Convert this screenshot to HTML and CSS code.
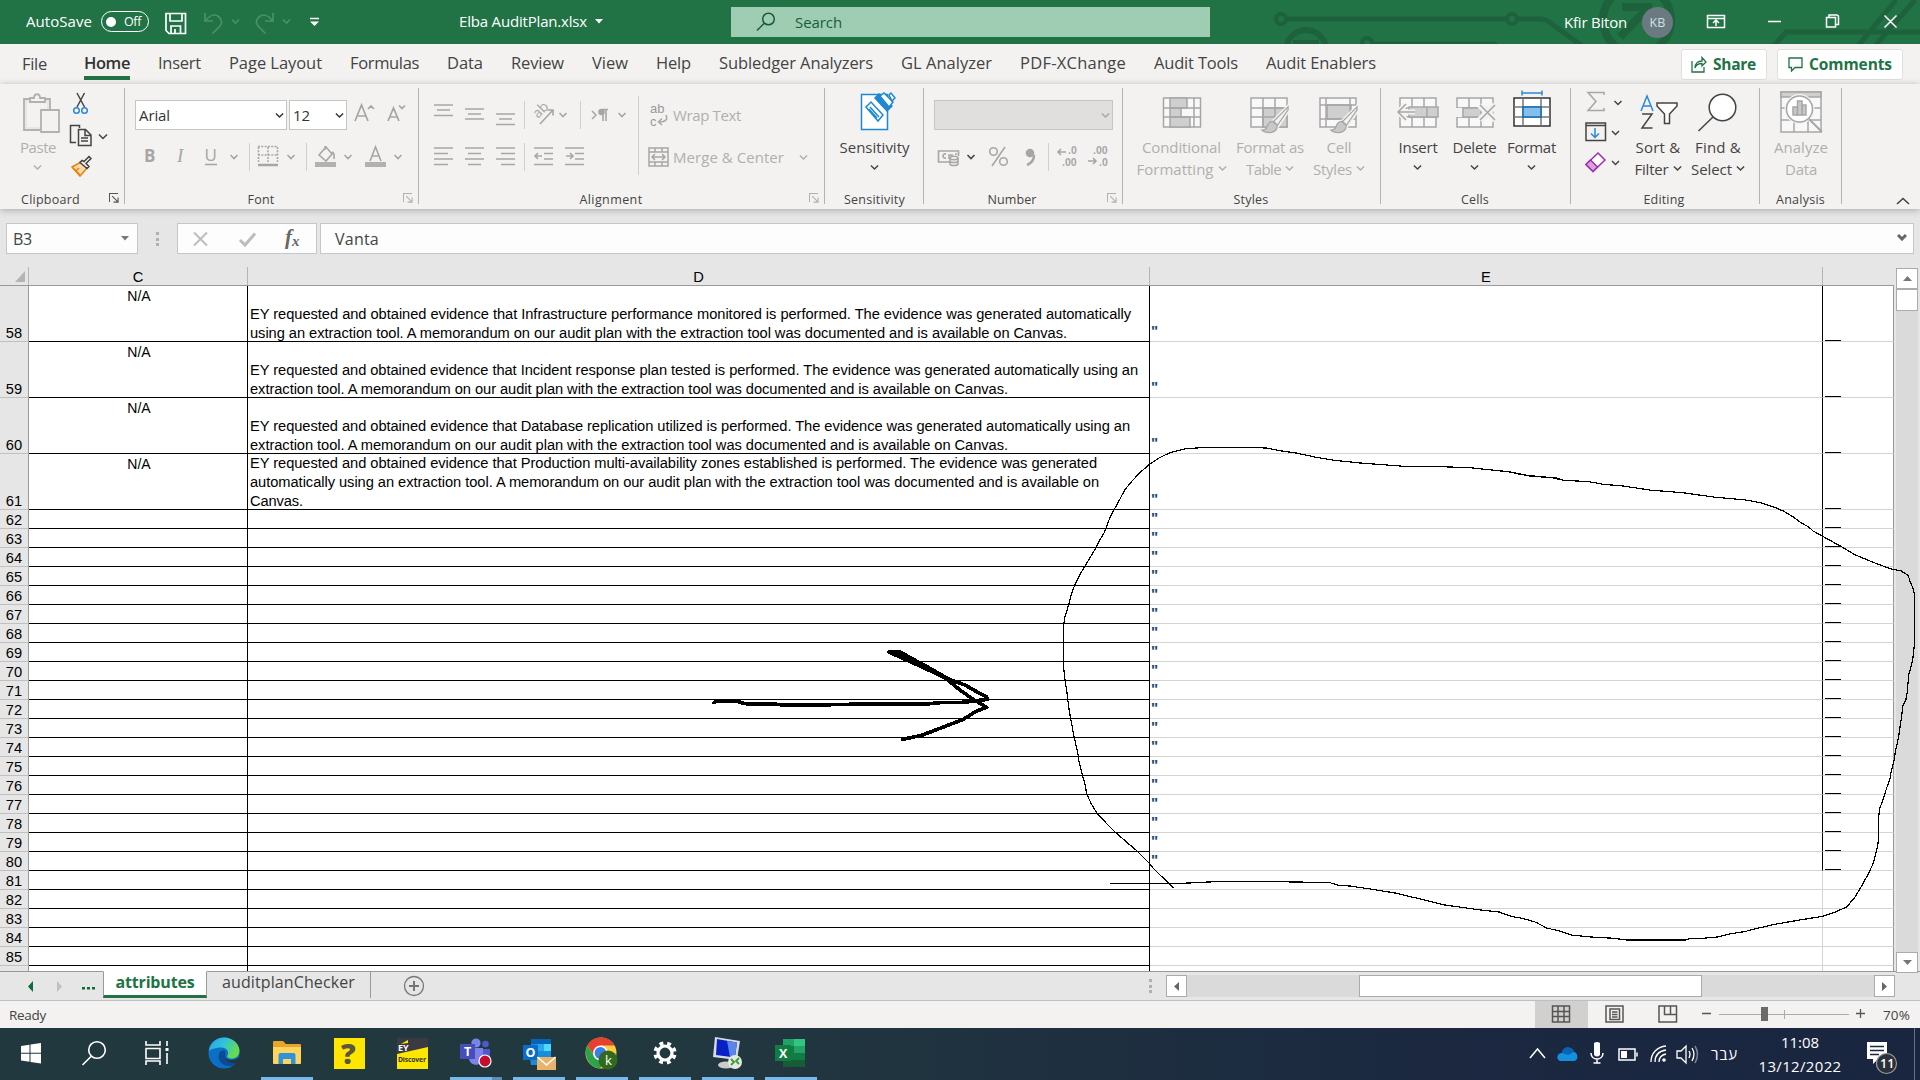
FILE: index.html
```html
<!DOCTYPE html>
<html lang="en">
<head>
<meta charset="utf-8">
<title>Elba AuditPlan.xlsx - Excel</title>
<link rel="stylesheet" href="styles.css">
</head>
<body>
<svg class="defs" width="0" height="0">
  <symbol id="chev" viewBox="0 0 10 7"><path d="M1 1.2l4 4 4-4" fill="none" stroke="currentColor" stroke-width="1.6"/></symbol>
  <symbol id="launch" viewBox="0 0 11 11"><path d="M.5 10V.5H10M3.5 3.5l6 6M10 5v5H5" fill="none" stroke="currentColor" stroke-width="1.2"/></symbol>
  <symbol id="brush" viewBox="0 0 32 32"><path d="M31 2L15 18l4 5L31 5z" fill="#f3f2f1" stroke="#f3f2f1" stroke-width="4"/><path d="M30 3L15 18l4 4L30 6z" fill="#f3f2f1" stroke="#a6a6a6" stroke-width="1.3"/><path d="M14 18c-4 0-5 3-6 6-1 2-3 3-5 3 3 3 12 4 15-1l1-4z" fill="#c8c8c8" stroke="#a6a6a6" stroke-width="1.3"/></symbol>
</svg>

<header class="titlebar">
  <svg class="art" width="660" height="44" viewBox="1260 0 660 44" fill="none" stroke="#1e623d" stroke-width="5">
    <circle cx="1281" cy="19" r="5" stroke-width="4"/><path d="M1287 19H1506M1518 19h22q6 0 12 5l30 22"/><circle cx="1512" cy="19" r="5" stroke-width="4"/>
    <circle cx="1306" cy="50" r="20" stroke-width="6"/><path d="M1293 43h26" stroke-width="6"/>
    <circle cx="1367" cy="43" r="5" stroke-width="4"/><path d="M1372 44h122l10 6"/>
    <circle cx="1637" cy="20" r="34" stroke-width="8"/><path d="M1622 7h26v26M1646 10l-26 27" stroke-width="8"/>
    <path d="M1774 46l12-14h134M1858 46l38-46M1875 46l40-46"/>
  </svg>
  <span class="autosave" data-w="66">AutoSave</span>
  <span class="toggle"><i></i><span data-w="17">Off</span></span>
  <svg class="qat" width="170" height="44" viewBox="155 0 170 44" fill="none" stroke="#fff" stroke-width="1.7">
    <path d="M166 13.500h19.500v20H169l-3-3zM170 14v7h12v-7M171 33v-7h9.500v7M175 33v-4"/>
    <g stroke="#4c9068"><path d="M205 13v8h8M205.500 20.500c4-5 9-7 13-4s4 7 1 10l-7 7"/><path d="M273 13v8h-8M272.500 20.500c-4-5-9-7-13-4s-4 7-1 10l7 7"/><path d="M232 19.500l3.500 3.500 3.500-3.500M283 19.500l3.500 3.500 3.500-3.500"/></g>
    <path d="M310 18.500h9" stroke-width="1.500"/><path d="M310 21.500h9l-4.500 4.500z" fill="#fff" stroke="none"/>
  </svg>
  <span class="docname" data-w="128">Elba AuditPlan.xlsx</span>
  <svg class="tri" width="8" height="5"><path d="M0 0h8L4 4.500z" fill="#fff"/></svg>
  <div class="search">
    <svg width="20" height="20" viewBox="0 0 20 20" fill="none" stroke="#185c37" stroke-width="1.500"><circle cx="12.500" cy="7" r="5.800"/><path d="M8.300 11.200L1 18.500"/></svg>
    <span data-w="47">Search</span>
  </div>
  <span class="user" data-w="63">Kfir Biton</span>
  <span class="avatar"><span data-w="16">KB</span></span>
  <svg class="winctl" width="220" height="44" viewBox="1700 0 220 44" fill="none" stroke="#fff" stroke-width="1.500">
    <path d="M1707.500 15.500h17v12h-17zM1707 18.500h18M1716 26v-5.500M1713 23l3-3 3 3M1768 21.500h13M1826.500 17.500h9v9.500h-9zM1829 17v-2h7.500q2 0 2 2v7.500h-2.500M1884.500 15.500l12 12M1896.500 15.500l-12 12"/>
  </svg>
</header>

<nav class="tabs">
  <span class="t-file" data-w="25">File</span><span class="active" data-w="46">Home</span><span data-w="43">Insert</span><span data-w="93">Page Layout</span><span data-w="69">Formulas</span><span data-w="36">Data</span><span data-w="53">Review</span><span data-w="36">View</span><span data-w="35">Help</span><span data-w="154">Subledger Analyzers</span><span data-w="91">GL Analyzer</span><span data-w="106">PDF-XChange</span><span data-w="84">Audit Tools</span><span data-w="110">Audit Enablers</span>
  <button class="share"><svg width="16" height="17" viewBox="0 0 16 17" fill="none" stroke="#217346" stroke-width="1.300"><path d="M1 5v11h12v-5M4 12c0-5 3-7 7-7V1.500L15 6l-4 4V7.500c-4 0-6 1-7 4.500z"/></svg><b data-w="43">Share</b></button>
  <button class="comments"><svg width="15" height="15" viewBox="0 0 15 15" fill="none" stroke="#217346" stroke-width="1.300"><path d="M1 1h13v9.500H7L3.500 14v-3.500H1z"/></svg><b data-w="83">Comments</b></button>
</nav>

<section class="ribbon">
  <div class="group g-clip">
    <div class="body">
      <div class="big off w65">
        <svg width="65" height="53" viewBox="0 84 65 53" fill="#e6e6e6" stroke="#b1b1b1" stroke-width="1.800"><path d="M24 99h26v31H24z"/><path d="M27 102h20v25H27z" fill="#f3f2f1" stroke="none"/><path d="M30 102v-4h4c0-5 6-5 6 0h5v4z" fill="#f3f2f1"/><path d="M41 110h18v22H41z" fill="#f3f2f1"/></svg>
        <span data-w="36">Paste</span><svg class="dd" width="9" height="7"><use href="#chev"/></svg>
      </div>
      <svg width="58" height="105" viewBox="65 84 58 105" fill="none" stroke="#444" stroke-width="1.500">
        <path d="M77 93l7.500 14M84.500 93L77 107"/><circle cx="76.500" cy="110.500" r="2.800" stroke="#2b88d8"/><circle cx="84.500" cy="110.500" r="2.800" stroke="#2b88d8"/>
        <path d="M76 142.500h-5.500v-17h9V128M78.500 129.500h7l5.500 5.500v10.500H78.500zM85 130v5.500h6M81 138h7M81 141h7"/>
        <path d="M99 134.500l4 4 4-4" />
        <path d="M72 167l9-5 6 6-7 8z" fill="#fbd9a8" stroke="#e8830c"/><path d="M76 171l3-3M73 168l7 7" stroke="#e8830c"/><path d="M80 162.500l7 6 2-2-3-3 5-5-2-2-5 5-2-1z" fill="#f3f2f1"/>
      </svg>
    </div>
    <div class="cap"><span data-w="59">Clipboard</span><svg class="launch dark" width="10" height="10"><use href="#launch"/></svg></div>
  </div>

  <div class="group g-font">
    <div class="body col">
      <div class="row1"><div class="combo c1"><span data-w="31">Arial</span><svg width="9" height="7"><use href="#chev"/></svg></div><div class="combo c2"><span data-w="17">12</span><svg width="9" height="7"><use href="#chev"/></svg></div>
        <svg width="68" height="30" viewBox="347 100 68 30" fill="none" stroke="#a6a6a6" stroke-width="1.700"><path d="M355 121l6.500-16 6.500 16M357.500 116h8M388 121l5.500-13 5.500 13M390 117h7M368 109l3-3 3 3M399 105.500l3 3 3-3"/></svg></div>
      <svg width="293" height="38" viewBox="125 138 293 38" fill="none" stroke="#a6a6a6" stroke-width="1.600">
        <text class="glyph b" x="144" y="162">B</text><text class="glyph i" x="177" y="162">I</text><text class="glyph" x="204.500" y="161">U</text><path d="M205 164.500h12"/>
        <path d="M230.500 155l3.500 3.500 3.500-3.500M287.500 155l3.500 3.500 3.500-3.500M344.500 155l3.500 3.500 3.500-3.500M394.500 155l3.500 3.500 3.500-3.500"/>
        <path d="M249.500 143v28M306.500 143v28" stroke="#d0cfce" stroke-width="1"/>
        <path d="M258.500 147v15M268 147v15M277.500 147v15M258 146.500h20M258 155h20" stroke-dasharray="2 1.300"/><path d="M258 165h20" stroke-width="2.500"/>
        <path d="M319 155l7-8 6 7-6 7zM325 150v-4M332 152c3 1 2 4 2 7" /><path d="M315 164.500h21M365 164.500h21" stroke-width="5" stroke="#b1b1b1"/><path d="M370 161l5.500-14 5.500 14M372 156h7"/>
      </svg>
    </div>
    <div class="cap"><span data-w="27">Font</span><svg class="launch" width="10" height="10"><use href="#launch"/></svg></div>
  </div>

  <div class="group g-align">
    <div class="body">
      <svg width="228" height="105" viewBox="419 84 228 105" fill="none" stroke="#a6a6a6" stroke-width="1.600">
        <path d="M434 105h19M437 110h13M434 115.500h19M465 109h19M468 114h13M465 119h19M496 114h19M499 119h13M496 124.500h19"/>
        <path d="M434 148h19M434 153.500h14M434 159h19M434 164.500h14M465 148h19M468 153.500h13M465 159h19M468 164.500h13M496 148h19M501 153.500h14M496 159h19M501 164.500h14"/>
        <path d="M534 148h19M544 153.500h9M544 159h9M534 164.500h19M535 156h7M538 153l-3 3 3 3M565 148h19M575 153.500h9M575 159h9M565 164.500h19M566 156h7M570 153l3 3-3 3"/>
        <path d="M524.500 101v28M580.500 101v28M524.500 143v28M638.500 96v79" stroke="#d0cfce" stroke-width="1"/>
        <text class="ab" transform="translate(538 119) rotate(-45)">ab</text><path d="M540 124l13-14M547.500 110h5.500v5.500"/>
        <path d="M559.500 113l3.500 3.500 3.500-3.500M618.500 113l3.500 3.500 3.500-3.500M592 111l4 4-4 4M603 121v-11M606 121v-11M608 109.500h-6"/><circle cx="601.500" cy="112" r="2.500" fill="#a6a6a6"/>
      </svg>
      <div class="col wrapcol">
        <div class="wrapbtn"><svg width="22" height="28" viewBox="0 -2 22 28" fill="none" stroke="#a6a6a6" stroke-width="1.500"><text class="ab2" x="3" y="10">ab</text><text class="ab2" x="3" y="22.500">c</text><path d="M19 12c2 4 0 7-7 7M15 15.500L11.500 19l3.500 3"/></svg><span data-w="68">Wrap Text</span></div>
        <div class="wrapbtn"><svg width="22" height="24" viewBox="0 0 22 24" fill="none" stroke="#a6a6a6" stroke-width="1.500"><path d="M2 3h19v18H2zM2 7h19M2 17h19M8 3v4M15 3v4M8 17v4M15 17v4M5 12h13M8 9l-3 3 3 3M15 9l3 3-3 3"/></svg><span data-w="111">Merge &amp; Center</span><svg class="mc" width="9" height="7"><use href="#chev"/></svg></div>
      </div>
    </div>
    <div class="cap"><span data-w="63">Alignment</span><svg class="launch" width="10" height="10"><use href="#launch"/></svg></div>
  </div>

  <div class="group g-sens">
    <div class="body center"><div class="big">
      <svg width="60" height="53" viewBox="844 84 60 53" fill="#fff" stroke="#1e88d2" stroke-width="1.500"><path d="M860.500 94.500h26v35h-26z"/><path d="M865 107l5-5 12 13-5 6z"/><path d="M869 107l9 10M868 109l8 9" /><path d="M874 98l4-4 13 12-5 5z" fill="#1e88d2"/><path d="M879 96l4-3 9 9-4 5z"/><path d="M888 95l2-2 4 5-3 3z"/></svg>
      <span data-w="70">Sensitivity</span><svg class="dd" width="9" height="7"><use href="#chev"/></svg></div></div>
    <div class="cap"><span data-w="61">Sensitivity</span></div>
  </div>

  <div class="group g-num">
    <div class="body col">
      <div class="row1"><div class="combo c3"><svg width="9" height="7"><use href="#chev"/></svg></div></div>
      <svg width="198" height="38" viewBox="924 138 198 38" fill="none" stroke="#a6a6a6" stroke-width="1.600">
        <path d="M951 162h-12.500v-11h20v5M946 154c-4-1-4 5 0 4M949 159v-4h3v2M955 154h2"/><path d="M950 158v6c0 2 8 2 8 0v-6M950 161c0 2 8 2 8 0" fill="#f3f2f1"/><ellipse cx="954" cy="158" rx="4" ry="1.700" fill="#f3f2f1"/>
        <path d="M967.500 155l3.500 3.500 3.500-3.500" stroke="#444"/>
        <circle cx="993.500" cy="151.500" r="3.800"/><circle cx="1003.500" cy="161.500" r="3.800"/><path d="M1005 147l-13 19"/>
        <path d="M1027 165c5-2 7-6 7-10" stroke-width="2.500"/><circle cx="1030" cy="153" r="4.300" fill="#a6a6a6" stroke="none"/>
        <path d="M1048.500 143v28" stroke="#d0cfce" stroke-width="1"/>
        <path d="M1058 152h8M1061 149l-3 3 3 3M1088 161h8M1093 158l3 3-3 3"/>
        <text class="dec" x="1068" y="154">.0</text><text class="dec" x="1062" y="166">.00</text><text class="dec" x="1093" y="154">.00</text><text class="dec" x="1099" y="166">.0</text>
      </svg>
    </div>
    <div class="cap"><span data-w="49">Number</span><svg class="launch" width="10" height="10"><use href="#launch"/></svg></div>
  </div>

  <div class="group g-styles">
    <div class="body">
      <div class="big off w100"><svg width="40" height="53" viewBox="1162 84 40 53" fill="none" stroke="#a6a6a6" stroke-width="1.500"><path d="M1163.500 98h37v29h-37z" fill="#f8f8f8"/><path d="M1170 98h17v10h-17zM1170 108h11v9h-11zM1170 117h20v10h-20z" fill="#cfcfcf"/><path d="M1163 108h38M1163 117h38M1194 98v29"/></svg><span data-w="79">Conditional</span><div class="l2"><span data-w="77">Formatting</span><svg width="9" height="7"><use href="#chev"/></svg></div></div>
      <div class="big off w76"><svg width="44" height="53" viewBox="1249 84 44 53" fill="none" stroke="#a6a6a6" stroke-width="1.500"><path d="M1252 98h36v29h-36z" fill="#f8f8f8"/><path d="M1264 108h24v19h-24z" fill="#cfcfcf"/><path d="M1252 108h36M1252 117h36M1264 98v29M1276 98v29"/><use href="#brush" x="1260" y="104" width="31" height="31"/></svg><span data-w="68">Format as</span><div class="l2"><span data-w="35">Table</span><svg width="9" height="7"><use href="#chev"/></svg></div></div>
      <div class="big off w62"><svg width="44" height="53" viewBox="1319 84 44 53" fill="none" stroke="#a6a6a6" stroke-width="1.500"><path d="M1322 98h36v29h-36z" fill="#f8f8f8"/><path d="M1329 105h24v14h-24z" fill="#cfcfcf"/><path d="M1322 105h36M1322 119h36M1328 98v29M1352 98v21"/><use href="#brush" x="1330" y="104" width="31" height="31"/></svg><span data-w="25">Cell</span><div class="l2"><span data-w="39">Styles</span><svg width="9" height="7"><use href="#chev"/></svg></div></div>
    </div>
    <div class="cap"><span data-w="35">Styles</span></div>
  </div>

  <div class="group g-cells">
    <div class="body">
      <div class="big w56"><svg width="46" height="53" viewBox="1396 84 46 53" fill="none" stroke="#a6a6a6" stroke-width="1.500"><path d="M1401 98h36v29h-36z" fill="#f8f8f8"/><path d="M1413 98v29M1425 98v29M1401 108h36M1401 117h36"/><path d="M1410 107h29v10h-29z" fill="#cfcfcf"/><path d="M1428 107v10"/><path d="M1416 112h-17M1407 104l-8 8 8 8" stroke="#f3f2f1" stroke-width="5"/><path d="M1416 112h-17M1407 104l-8 8 8 8"/></svg><span data-w="39">Insert</span><svg class="dd" width="9" height="7"><use href="#chev"/></svg></div>
      <div class="big w57"><svg width="46" height="53" viewBox="1452 84 46 53" fill="none" stroke="#a6a6a6" stroke-width="1.500"><path d="M1457 98h36v29h-36z" fill="#f8f8f8"/><path d="M1469 98v29M1481 98v29M1457 108h36M1457 117h36"/><path d="M1455 108h8v9h-8z" fill="#f3f2f1" stroke="none"/><path d="M1463 108h18v9h-18z" fill="#cfcfcf"/><path d="M1480 105l15 15M1495 105l-15 15" stroke="#f3f2f1" stroke-width="7"/><path d="M1480 105l15 15M1495 105l-15 15"/></svg><span data-w="44">Delete</span><svg class="dd" width="9" height="7"><use href="#chev"/></svg></div>
      <div class="big w57"><svg width="46" height="53" viewBox="1509 84 46 53" fill="none" stroke="#777" stroke-width="1.500"><path d="M1514 98h36v28h-36z" fill="#fff" stroke="#333"/><path d="M1523 98v28M1541 98v28M1514 107h36M1514 117h36"/><path d="M1523 107h18v10h-18z" fill="#83beec" stroke="#0f6cbd"/><path d="M1522 93h20M1522 90.500v5M1542 90.500v5" stroke="#2b88d8"/></svg><span data-w="49">Format</span><svg class="dd" width="9" height="7"><use href="#chev"/></svg></div>
    </div>
    <div class="cap"><span data-w="28">Cells</span></div>
  </div>

  <div class="group g-edit">
    <div class="body">
      <svg width="58" height="105" viewBox="1571 84 58 105" fill="none" stroke="#444" stroke-width="1.500">
        <path d="M1604 95v-2.500h-16l8 9-8 9h16V108" stroke="#a6a6a6"/><path d="M1614.500 101l3.500 3.500 3.500-3.500M1612 131l3.500 3.500 3.500-3.500M1612 161l3.500 3.500 3.500-3.500"/>
        <path d="M1586 123h19.500v17.500H1586zM1586 125.500h19"/><path d="M1595 128v9M1591 133.500l4 4 4-4" stroke="#2b88d8"/>
        <path d="M1598 153l7 7-12 11.500-7-7z" fill="#fff" stroke="#9b2fae"/><path d="M1590.500 160l7 7-4.500 4.500-7-7z" fill="#dba0dc" stroke="#9b2fae"/>
      </svg>
      <div class="big w58"><svg width="46" height="53" viewBox="1634 84 46 53" fill="none" stroke="#444" stroke-width="1.500"><path d="M1640 111l6-15 6 15M1642 106h8" stroke="#2b88d8"/><path d="M1641 114h10l-10 14h10.500"/><path d="M1656 103h20v3l-7.500 8v9.500h-5V114l-7.500-8z" fill="#fff"/></svg><span data-w="45">Sort &amp;</span><div class="l2"><span data-w="34">Filter</span><svg width="9" height="7"><use href="#chev"/></svg></div></div>
      <div class="big w62"><svg width="46" height="53" viewBox="1695 84 46 53" fill="none" stroke="#444" stroke-width="1.500"><circle cx="1722.500" cy="107.500" r="13.300" fill="#fff"/><path d="M1713 117l-14.500 14"/></svg><span data-w="46">Find &amp;</span><div class="l2"><span data-w="41">Select</span><svg width="9" height="7"><use href="#chev"/></svg></div></div>
    </div>
    <div class="cap"><span data-w="41">Editing</span></div>
  </div>

  <div class="group g-ana">
    <div class="body center"><div class="big off"><svg width="46" height="53" viewBox="1778 84 46 53" fill="none" stroke="#a6a6a6" stroke-width="1.500"><path d="M1781 92h40v40h-40z" fill="#f8f8f8"/><path d="M1781 92h40v5h-40z" fill="#cfcfcf"/><path d="M1781 108h40M1781 120h40M1794 120v12M1808 120v12"/><circle cx="1799.500" cy="109" r="15" fill="#f3f2f1" stroke="none"/><circle cx="1799.500" cy="109" r="13" fill="#fff"/><path d="M1793 107h4.500v8h-4.500zM1802 105h4v10h-4z" fill="#c8c8c8"/><path d="M1797.500 101h4.500v14h-4.500z" fill="#c8c8c8"/><path d="M1809 119l13 13" stroke-width="2"/></svg><span data-w="54">Analyze</span><span data-w="32">Data</span></div></div>
    <div class="cap"><span data-w="49">Analysis</span></div>
  </div>
  <svg class="collapse" width="14" height="8" fill="none" stroke="#444" stroke-width="1.600"><path d="M1 7l6-5.500L13 7"/></svg>
</section>

<section class="formula">
  <div class="namebox"><span data-w="19">B3</span><svg width="8" height="5"><path d="M0 0h8L4 4.500z" fill="#777"/></svg></div>
  <div class="dots"></div>
  <div class="fxbox"><svg width="138" height="29" viewBox="178 224 138 29" fill="none" stroke="#bdbdbd" stroke-width="2"><path d="M194 232.500l13 13M207 232.500l-13 13"/><path d="M240 240l5 5 10-11.500" stroke-width="3"/><text class="fx" x="285" y="244">f</text><text class="fx s" x="292" y="246">x</text></svg></div>
  <div class="fbar"><span data-w="44">Vanta</span><svg width="10" height="7" fill="none" stroke="#666" stroke-width="3"><path d="M1 1l4 4 4-4"/></svg></div>
</section>

<main class="sheet">
  <div class="cells">
    <div class="colheads"><div class="corner"><svg width="10" height="11"><path d="M10 0v11H0z" fill="#b4b4b4"/></svg></div><div class="h-c">C</div><div class="h-d">D</div><div class="h-e">E</div><div class="h-f"></div></div>
    <div class="rows" id="rows"></div>
  </div>
  <div class="vscroll">
    <div class="sbtn"><svg width="9" height="5"><path d="M0 5h9L4.500 0z" fill="#777"/></svg></div>
    <div class="vthumb"></div>
    <div class="sbtn low"><svg width="9" height="5"><path d="M0 0h9L4.500 5z" fill="#777"/></svg></div>
  </div>
</main>

<footer class="sheettabs">
  <svg width="103" height="29" viewBox="0 971 103 29"><path d="M33 980v11l-5-5.500z" fill="#0e6b3a"/><path d="M57 980v11l5-5.500z" fill="#c0c0c0"/><path d="M82 986h3v2.500h-3zM87 986h3v2.500h-3zM92 986h3v2.500h-3z" fill="#0e6b3a"/></svg>
  <div class="stab on"><b data-w="79">attributes</b></div>
  <div class="stab"><span data-w="133">auditplanChecker</span></div>
  <svg class="plus" width="22" height="22" fill="none" stroke="#777" stroke-width="1.300"><circle cx="11" cy="11" r="9.500"/><path d="M11 6v10M6 11h10" stroke-width="2"/></svg>
  <div class="dots small"></div>
  <div class="hscroll"><div class="hbtn"><svg width="5" height="9"><path d="M5 0v9L0 4.500z" fill="#666"/></svg></div><div class="hthumb"></div><div class="hbtn r"><svg width="5" height="9"><path d="M0 0v9l5-4.500z" fill="#666"/></svg></div></div>
</footer>

<div class="status">
  <span class="ready" data-w="37">Ready</span>
  <svg width="345" height="27" viewBox="1535 1001 345 27" fill="none" stroke="#555" stroke-width="1.500">
    <path d="M1535 1001h53v27h-53z" fill="#d2d0ce" stroke="none"/>
    <path d="M1552.500 1006h17v16h-17zM1558 1006v16M1564 1006v16M1552 1011.500h18M1552 1016.500h18"/>
    <path d="M1606 1006h17v16h-17zM1610 1009h9.500v10.500H1610zM1612 1012h5.500M1612 1014.500h5.500M1612 1017h5.500"/>
    <path d="M1659 1006h17.500v16H1659zM1664.500 1006v8.500h6v-8.500M1670.500 1014.500h6"/>
    <path d="M1702 1013.500h9M1856 1013.500h9M1860.500 1009v9" stroke-width="1.300"/>
    <path d="M1719 1014.500h130M1784.500 1010v9" stroke="#ababab" stroke-width="1"/><path d="M1761 1007h7v14h-7z" fill="#6a6a6a" stroke="none"/>
  </svg>
  <span data-w="27">70%</span>
</div>

<div class="taskbar">
  <div class="task first"><svg width="22" height="22" viewBox="0 0 22 22" fill="#fff"><path d="M1 4l8.500-1.300v8H1zM10.500 2.500L21 1v9.700H10.500zM1 11.700h8.500v8L1 18.500zM10.500 11.700H21v9.800L10.500 20z"/></svg></div>
  <div class="task"><svg width="26" height="26" viewBox="0 0 26 26" fill="none" stroke="#fff" stroke-width="1.600"><circle cx="16" cy="10" r="8.300"/><path d="M10 16.500L1.500 25"/></svg></div>
  <div class="task"><svg width="26" height="26" viewBox="0 0 26 26" fill="none" stroke="#fff" stroke-width="1.600"><path d="M2 1v4h14V1M2 8.500h14v10H2zM2 25v-4h14v4M23 1v5M23 13v11"/><path d="M21.500 8h3v3h-3z" fill="#fff" stroke="none"/></svg></div>
  <div class="task edge"><svg width="32" height="32" viewBox="0 0 32 32"><defs><linearGradient id="e1" x1="0" y1="0" x2="1" y2=".4"><stop offset="0" stop-color="#2a9fe6"/><stop offset=".5" stop-color="#2fc2df"/><stop offset="1" stop-color="#66dc4c"/></linearGradient></defs><circle cx="16" cy="16" r="15.500" fill="#0b6fc8"/><path d="M.8 14C2 5 9 .5 16 .5 25 .500 31.500 7 31.500 14c0 5-4 7.500-8 7.500-3 0-5-1-4-3 2-4-1-8-6-8-6 0-11 2-12.700 3.500z" fill="url(#e1)"/><path d="M12 15c-4 6 1 14 9 14 4 0 7-2 8-3.500-5 1.500-12-1-12-7 0-3 1-5-1-5-2 0-3 0-4 1.500z" fill="#0d4a94"/><path d="M17.500 15c-3 3 0 8 6 8 3 0 5-1 6.500-2.500l2.500 2-1 3c-6 2-13 0-14.500-5-.5-2 0-4 .5-5.500z" fill="#22363f"/></svg></div>
  <div class="task run"><svg width="28" height="28" viewBox="0 0 28 28"><path d="M0 3q0-1 1-1h9l3 3h14q1 0 1 1v16H0z" fill="#e8a52b"/><path d="M0 8h28v16q0 1-1 1H1q-1 0-1-1z" fill="#ffd45e"/><path d="M5.500 25V16q0-2 2-2h13q2 0 2 2v9h-4.500v-5h-8v5z" fill="#2f93dc"/></svg></div>
  <div class="task"><svg width="31" height="31"><path d="M0 0h31v31H0z" fill="#ffe600"/><text class="qm" x="7" y="26">?</text></svg></div>
  <div class="task"><svg width="31" height="31"><path d="M0 0h31v31H0z" fill="#ffe600"/><path d="M0 0h31v9L0 16z" fill="#3a3a42"/><path d="M4 6l7-4v3z" fill="#ffe600"/><text class="ey" x="1" y="13">EY</text><text class="disc" x="1" y="24" textLength="28">Discover</text></svg></div>
  <div class="task run two"><svg width="32" height="30" viewBox="0 0 32 30"><circle cx="16" cy="5" r="4.600" fill="#7b83eb"/><circle cx="25.500" cy="6" r="3.300" fill="#5059c9"/><path d="M20 11h10v10c0 3-3 5-6 5z" fill="#5059c9"/><path d="M9 10h14v10c0 9-14 9-14 0z" fill="#7b83eb"/><path d="M0 6h15v15H0z" fill="#464eb8"/><text class="app" x="4" y="18">T</text><circle cx="25" cy="23" r="6" fill="#c50f2d" stroke="#fff" stroke-width="1.200"/></svg></div>
  <div class="task run"><svg width="34" height="34" viewBox="0 0 34 34"><path d="M9 3h20v20H9z" fill="#1490df"/><path d="M9 3h20v5H9z" fill="#0364b8"/><path d="M15 8h7v7h-7z" fill="#28a8ea"/><path d="M22 8h7v7h-7z" fill="#50d9ff"/><path d="M7 17h18v12H9z" fill="#1a8bd6"/><path d="M1 9h15v15H1z" fill="#0a6cc9"/><text class="app" x="3.500" y="21">O</text><path d="M15 21h19v13H15z" fill="#e9b36e"/><path d="M15.500 21l9 8 9-8" fill="none" stroke="#fff" stroke-width="1.500"/></svg></div>
  <div class="task run"><svg width="33" height="33" viewBox="0 0 33 33"><circle cx="16" cy="16" r="15.500" fill="#ffcd40"/><path d="M16 .5C10 .5 5 3.500 2.500 8.500l7 11L16 8.500h13.500C27 3.500 22 .5 16 .5z" fill="#e8402f"/><path d="M2.500 8.500C-2 17 3 30 15 31.500l6.500-11H10z" fill="#2ba24c"/><circle cx="15.500" cy="16" r="7.500" fill="#fff"/><circle cx="15.500" cy="16" r="5.900" fill="#3b7de9"/><circle cx="23" cy="23" r="9.500" fill="#32691e"/><text class="k" x="20" y="28">k</text></svg></div>
  <div class="task run"><svg width="26" height="26" viewBox="-13 -13 26 26" fill="none" stroke="#fff"><circle r="7" stroke-width="3.200"/><circle r="9.800" stroke-width="3.600" stroke-dasharray="3.850 3.850" transform="rotate(11)"/></svg></div>
  <div class="task run"><svg width="32" height="32" viewBox="0 0 32 32"><path d="M3 0l25 4-3 19L1 20z" fill="#d7dbe2"/><path d="M5 2l20 3.500-2 15L4 18z" fill="#0a1fc4"/><path d="M15 4l10 1.500-2 15-5-.5z" fill="#5a86ea"/><ellipse cx="14" cy="28" rx="8" ry="3.500" fill="#ccc"/><circle cx="23" cy="25" r="7" fill="#e5e8e5"/><path d="M19 22l3 3-3 3M27 21l-3 3 3 3" fill="none" stroke="#36a02a" stroke-width="1.800"/></svg></div>
  <div class="task run"><svg width="31" height="30" viewBox="0 0 31 30"><path d="M8 1h22v28H8z" fill="#107c41"/><path d="M8 1h11v7H8z" fill="#21a366"/><path d="M19 1h11v7H19z" fill="#33c481"/><path d="M19 8h11v7H19z" fill="#21a366"/><path d="M8 22h22v7H8z" fill="#185c37"/><path d="M0 7h16v16H0z" fill="#107c41"/><text class="app" x="4" y="20">X</text></svg></div>
  <div class="tray">
    <svg width="180" height="52" viewBox="1525 1028 180 52" fill="none" stroke="#fff" stroke-width="1.500">
      <path d="M1530 1058l7.500-9 7.500 9"/>
      <path d="M1561 1061c-5 0-5-8 1-8 1-7 10-7 12-1 4 0 5 9 0 9z" fill="#1490df" stroke="none"/><path d="M1562 1053c1-7 10-7 12-1l-6 3z" fill="#0364b8" stroke="none"/>
      <path d="M1594 1043q3-2 6 0v12q-3 3-6 0z" fill="#fff" stroke="none"/><path d="M1591 1053c0 8 12 8 12 0M1597 1059v4M1593.500 1063h7"/>
      <path d="M1619 1049h16v11h-16zM1637 1052.500v4"/><path d="M1621 1051h6v7h-6z" fill="#fff" stroke="none"/>
      <path d="M1651 1062c0-9 6-15 15-16M1655 1062c0-7 4-11 11-12M1659 1062c0-4 2-7 7-8" stroke-width="1.300"/><circle cx="1664" cy="1060" r="1.800" fill="#fff" stroke="none"/>
      <path d="M1677 1051h4l5-5v17l-5-5h-4zM1689 1051q2 3 0 7M1692 1048q4 6 0 13" stroke-width="1.300"/><path d="M1695 1046q5 8 0 17" stroke="#7b8796"/>
    </svg>
    <span class="lang" data-w="27">עבר</span>
    <div class="clock"><span data-w="38">11:08</span><span data-w="83">13/12/2022</span></div>
    <svg width="62" height="52" viewBox="1858 1028 62 52"><path d="M1867 1042h20v17h-9l-5 5v-5h-6z" fill="#fff"/><path d="M1870 1046.500h14M1870 1050.500h14M1870 1054.500h9" stroke="#1b2840" stroke-width="1.300"/><circle cx="1886.500" cy="1063.500" r="10" fill="#2b3138" stroke="#999" stroke-width="1.200"/><text class="badge" x="1880" y="1068">11</text><path d="M1914.500 1028v52" stroke="#66717f"/></svg>
  </div>
</div>

<svg class="ink" width="1920" height="1080" fill="none" stroke="#000">
  <g transform="translate(1060 270) scale(.3333 .3954)" shape-rendering="crispEdges"><path vector-effect="non-scaling-stroke" stroke-width="1.200" d="M340 1563L325 1549 305 1534 283 1516 265 1498 232 1470 200 1447 165 1421 140 1400 112 1375 95 1352 80 1325 75 1300 66 1274 56 1240 54 1225 43 1183 33 1140 26 1105 21 1070 14 1030 11 1005V900L14 880 22 858 35 818 45 795 60 770 80 742 108 702 120 682 134 662 148 630 160 609 172 592 195 555 215 535 240 512 268 492 300 474 330 462 378 452 430 449 617 450 660 457 710 463 770 474 820 481 900 488 1025 496 1160 498 1232 500 1285 505 1345 510 1410 521 1500 527M150 1551H370L465 1547H638L808 1549 835 1556 870 1558 935 1566 1008 1576 1155 1606 1266 1619 1321 1624"/></g>
  <g transform="translate(1500 270) scale(.3333 .4464)" shape-rendering="crispEdges"><path vector-effect="non-scaling-stroke" stroke-width="1.200" d="M0 451L30 452 60 458 95 461 155 465 190 471 265 474 310 480 370 484 450 493 550 499 645 509 735 515 780 521 828 533 850 540 880 553 905 567 925 575 940 585 967 596 1020 618 1065 638 1130 658 1175 670 1203 674 1225 684 1229 695 1240 715 1244 730V835L1238 875 1226 908 1222 945 1218 962 1209 975 1204 1005 1195 1050 1186 1080 1182 1100 1173 1125 1170 1140 1158 1165 1150 1185 1140 1205 1136 1225 1135 1280 1130 1300 1121 1327 1107 1350 1085 1380 1065 1405 1040 1427 1000 1440 967 1448 900 1456 830 1465 770 1475 735 1482 690 1487 655 1494 610 1497 570 1498 555 1501H380L340 1497 270 1494 215 1490 180 1481 140 1474 107 1461 70 1453 35 1448 0 1439"/></g>
  <g transform="translate(700 630) scale(.3333)" shape-rendering="crispEdges" stroke-width="11" stroke-linecap="round" stroke-linejoin="round"><path d="M42 218L50 214H110L135 221 220 222 260 226 340 225 450 223 680 222 720 218 790 217 862 208 860 200 830 185 795 165 745 147 690 115 640 88 600 66 566 66 625 92 690 122 740 147 780 180 815 205 860 232 830 243 790 268 720 295 665 316 608 328M600 72L640 92 700 122"/></g>
</svg>
<script src="sheet.js"></script>
</body>
</html>
```

FILE: styles.css
```css
* { box-sizing: border-box; }
body { margin: 0; width: 1920px; height: 1080px; overflow: hidden; display: flex; flex-direction: column; font-family: "Open Sans", "Noto Sans", sans-serif; font-size: 15px; color: #444; background: #e6e6e6; }
svg { display: block; flex: none; }
.defs { position: absolute; }
span, b { white-space: nowrap; }
[data-w] { display: block; flex: none; }

.titlebar { position: relative; height: 44px; flex: none; background: #217346; color: #fff; display: flex; align-items: center; }
.titlebar > * { position: relative; flex: none; }
.titlebar .art { position: absolute; right: 0; top: 0; }
.autosave { margin-left: 26px; font-size: 15px; margin-top: -2px; }
.toggle { margin-left: 9px; margin-top: -1px; width: 48px; height: 21px; border: 1.5px solid #fff; border-radius: 11px; display: flex; align-items: center; font-size: 12.5px; }
.toggle i { width: 10px; height: 10px; border-radius: 50%; background: #fff; margin: 0 8px 0 4px; }
.qat { margin-left: 6px; }
.docname { margin-left: 134px; margin-top: -3px; font-size: 15px; }
.tri { margin-left: 8px; margin-top: -2px; }
.search { margin-left: 128px; width: 479px; height: 30px; background: #9fcdb3; display: flex; align-items: center; color: #185c37; padding: 0 0 1px 25px; gap: 19px; font-size: 15px; }
.user { margin-left: 354px; font-size: 15px; }
.avatar { margin-left: 15px; width: 31px; height: 31px; border-radius: 50%; background: #6b7a80; color: #cfe0e4; font-size: 12.5px; display: flex; align-items: center; justify-content: center; }
.winctl { margin-left: 27px; }

.tabs { height: 40px; flex: none; background: #f3f2f1; display: flex; align-items: center; gap: 28px; font-size: 16.5px; }
.tabs > span { line-height: 38px; margin-top: -2px; }
.tabs .t-file { margin-left: 22px; margin-right: 9px; margin-top: 0; }
.tabs .active { font-weight: 600; color: #333; line-height: 24px; padding: 7px 0 1px; border-bottom: 4px solid #217346; height: 36px; align-self: flex-start; margin-top: 0; }
button { font: inherit; background: #fff; border: 1px solid #e1dfdd; border-radius: 3px; height: 31px; color: #217346; display: flex; align-items: center; padding: 0 0 0 9px; gap: 6px; flex: none; }
button b { font-weight: 700; font-size: 15.5px; }
.share { width: 86px; margin-left: 277px; }
.comments { width: 126px; margin-left: -18px; padding-left: 10px; }

.ribbon { height: 125px; flex: none; background: #f3f2f1; display: flex; position: relative; z-index: 1; box-shadow: 0 1px 7px rgba(0,0,0,.28); }
.group { position: relative; display: flex; flex-direction: column; }
.group::after { content: ""; position: absolute; right: 0; top: 4px; height: 116px; width: 1px; background: #b5b3b1; }
.g-clip { width: 125px; } .g-font { width: 294px; } .g-align { width: 406px; } .g-sens { width: 99px; } .g-num { width: 199px; } .g-styles { width: 258px; } .g-cells { width: 190px; } .g-edit { width: 189px; } .g-ana { width: 82px; }
.body { height: 105px; display: flex; }
.col { display: flex; flex-direction: column; }
.center { justify-content: center; }
.cap { height: 20px; display: flex; justify-content: center; align-items: center; font-size: 12.5px; position: relative; }
.g-clip .cap { padding-right: 24px; } .g-align .cap { padding-right: 22px; } .g-num .cap { padding-right: 23px; }
.g-font .cap { padding-right: 22px; } .g-styles .cap, .g-cells .cap { padding-right: 2px; } .g-edit .cap { padding-right: 3px; } .g-ana .cap { padding-right: 1px; }
.launch { position: absolute; right: 6px; top: 4px; color: #b1b1b1; }
.launch.dark { color: #555; }
.big { display: flex; flex-direction: column; align-items: center; color: #444; font-size: 15px; }
.big > svg:first-child { margin-bottom: -1px; }
.big span { line-height: 22px; }
.big.off { color: #b1afad; }
.dd { margin-top: 6px; margin-right: 1px; }
.l2 { display: flex; align-items: center; gap: 4px; }
.l2 svg { margin-top: -2px; }
.w65 { width: 65px; } .w65 > span { margin-left: 11px; } .w65 .dd { margin-left: 11px; }
.w62 { width: 62px; } .w56 { width: 56px; } .w57 { width: 57px; } .w58 { width: 58px; }
.w100 { width: 105px; padding-left: 8px; }
.w76 { width: 80px; }
.g-styles .w62 { margin-left: -1px; width: 60px; }
.g-styles .body { padding-left: 2px; }
.g-cells .body { padding-left: 9px; }
.row1 { display: flex; padding: 16px 0 8px 10px; align-items: center; }
.combo { height: 30px; background: #fff; border: 1px solid #c8c6c4; display: flex; align-items: center; justify-content: space-between; padding: 0 2px 0 3px; font-size: 15px; color: #333; }
.c1 { width: 152px; margin-right: 2px; } .c2 { width: 58px; }
.c3 { width: 179px; background: #e1dfdd; justify-content: flex-end; color: #a6a6a6; }
.glyph { fill: #a6a6a6; stroke: none; font-size: 17px; }
.b { font-weight: 700; } .i { font-style: italic; font-family: "Liberation Serif", serif; font-size: 19px; }
.ab { fill: #a6a6a6; stroke: none; font-size: 14px; }
.ab2 { fill: #999; stroke: none; font-size: 13px; font-family: "Liberation Sans", sans-serif; }
.dec { fill: #a6a6a6; stroke: none; font-size: 10.5px; font-family: "Liberation Sans", sans-serif; font-weight: 700; }
.wrapcol { padding-top: 19px; gap: 18px; color: #b1afad; font-size: 15px; }
.wrapbtn { display: flex; align-items: center; height: 24px; gap: 4px; }
.mc { margin-left: 11px; }
.collapse { margin: 113px 0 0 54px; }

.formula { height: 58px; flex: none; padding: 14px 0 0 6px; display: flex; font-size: 16px; }
.namebox, .fxbox, .fbar { height: 31px; border: 1px solid #c6c6c6; background: #fdfdfd; display: flex; align-items: center; justify-content: space-between; }
.namebox { width: 132px; padding: 0 8px 0 6px; }
.dots { width: 3px; height: 14px; margin: 9px 18px 0 18px; background: repeating-linear-gradient(#b0b0b0 0 3px, transparent 3px 5.5px); }
.fxbox { width: 140px; margin-right: 3px; }
.fx { font-family: "Liberation Serif", serif; font-style: italic; font-weight: 700; font-size: 21px; fill: #666; stroke: none; }
.fx.s { font-size: 15px; }
.fbar { width: 1594px; padding: 0 6px 0 14px; }
.fbar svg { margin-top: -2px; }

.sheet { height: 704px; flex: none; display: flex; font-family: "Liberation Sans", Arial, sans-serif; color: #000; }
.cells { width: 1894px; overflow: hidden; }
.colheads { height: 19px; display: flex; border-bottom: 1px solid #999; line-height: 20px; font-size: 14.67px; text-align: center; }
.colheads div { border-right: 1px solid #b5b5b5; height: 18px; }
.corner { width: 29px; padding: 4px 0 0 15px; }
.h-c { width: 219px; } .h-d { width: 902px; } .h-e { width: 673px; } .colheads .h-f { width: 71px; border: 0; }
.rows { height: 685px; overflow: hidden; background: #fff; }
.row { display: flex; height: 19px; }
.row.tall { height: 56px; }
.row > div { border-right: 1px solid #000; border-bottom: 1px solid #000; display: flex; flex-direction: column; justify-content: flex-end; }
.row .n { width: 29px; background: #e6e6e6; border-color: #999; border-bottom-color: #c0c0c0; align-items: center; font-size: 14.67px; line-height: 16px; }
.row .c { width: 219px; font-size: 14px; line-height: 20px; align-items: center; justify-content: flex-start; padding-left: 2px; }
.row .d { width: 902px; font-size: 14.67px; padding-left: 2px; align-items: flex-start; }
.row .d span { line-height: 19px; position: relative; top: 2px; }
.row .e { width: 673px; border-bottom-color: #d4d4d4; padding: 0 0 3px 1px; color: #174a73; font-size: 15px; font-weight: 700; line-height: 15px; }
.row.end .e { border-right-color: #d4d4d4; }
.row .f { width: 71px; border-bottom-color: #d4d4d4; border-right-color: #999; padding-left: 2px; }
.row .f i { width: 16px; height: 1px; background: #000; }

.vscroll { margin: 1px 0 0 2px; width: 22px; height: 705px; background: #dadada; display: flex; flex-direction: column; position: relative; z-index: 1; }
.sbtn { height: 21px; border: 1px solid #ababab; background: #fff; display: flex; align-items: center; justify-content: center; flex: none; }
.vthumb { height: 22px; border: 1px solid #ababab; background: #fff; flex: none; }
.sbtn.low { margin-top: auto; }

.sheettabs { height: 30px; flex: none; border-top: 1px solid #999; border-bottom: 1px solid #c0c0c0; display: flex; background: #e6e6e6; font-size: 16px; }
.stab { height: 26px; display: flex; justify-content: center; width: 164px; border-right: 1px solid #999; line-height: 20px; }
.stab.on { width: 104px; margin-top: -1px; height: 27px; background: #fff; color: #217346; border: 1px solid #999; border-top-color: #fff; border-bottom: 3px solid #217346; }
.plus { margin: 3px 0 0 32px; }
.dots.small { margin: 7px 14px 0 724px; }
.hscroll { width: 729px; height: 22px; margin-top: 3px; background: #dadada; display: flex; }
.hbtn { width: 21px; border: 1px solid #ababab; background: #fff; display: flex; align-items: center; justify-content: center; }
.hthumb { margin-left: 172px; width: 343px; background: #fff; border: 1px solid #ababab; }
.hbtn.r { margin-left: auto; }

.status { height: 27px; flex: none; background: #f3f2f1; display: flex; align-items: center; font-size: 13.5px; gap: 3px; }
.ready { margin: 0 1486px 0 9px; }

.taskbar { height: 52px; flex: none; background: linear-gradient(90deg, #22383f 0%, #22383f 35%, #1b2840 75%, #1a2640 100%); display: flex; color: #fff; }
.task { width: 63px; height: 52px; display: flex; align-items: center; justify-content: center; flex: none; padding-bottom: 2px; }
.task svg { overflow: visible; }
.task.first { width: 61px; margin-right: 1px; }
.task.edge { margin-left: 4px; }
.task.run { background: linear-gradient(#76b9ed, #76b9ed) center bottom / 52px 3px no-repeat; }
.task.two { background: linear-gradient(90deg, #76b9ed 42px, #5b8fb8 42px) center bottom / 52px 3px no-repeat; }
.qm { font-weight: 800; font-size: 29px; fill: #5c5540; }
.ey { font-weight: 700; font-size: 9px; fill: #fff; } .disc { font-weight: 700; font-size: 6.8px; fill: #333; }
.app { font-weight: 700; font-size: 12.5px; fill: #fff; } .k { font-size: 13px; fill: #fff; }
.tray { margin-left: auto; display: flex; align-items: center; }
.lang { font-size: 15px; margin-left: 6px; }
.clock { display: flex; flex-direction: column; align-items: center; width: 92px; font-size: 15px; line-height: 24px; margin: 0 12px 0 16px; }
.badge { font-size: 12.5px; font-weight: 600; fill: #fff; }

.ink { position: absolute; left: 0; top: 0; z-index: 5; pointer-events: none; }
```

FILE: sheet.js
```js
const notes = {
  58: [["EY requested and obtained evidence that Infrastructure performance monitored is performed. The evidence was generated automatically", 881], ["using an extraction tool. A memorandum on our audit plan with the extraction tool was documented and is available on Canvas.", 817]],
  59: [["EY requested and obtained evidence that Incident response plan tested is performed. The evidence was generated automatically using an", 888], ["extraction tool. A memorandum on our audit plan with the extraction tool was documented and is available on Canvas.", 758]],
  60: [["EY requested and obtained evidence that Database replication utilized is performed. The evidence was generated automatically using an", 880], ["extraction tool. A memorandum on our audit plan with the extraction tool was documented and is available on Canvas.", 758]],
  61: [["EY requested and obtained evidence that Production multi-availability zones established is performed. The evidence was generated", 847], ["automatically using an extraction tool. A memorandum on our audit plan with the extraction tool was documented and is available on", 849], ["Canvas.", 53]]
};

// Build the visible rows of the worksheet.
let html = "";
for (let n = 58; n <= 86; n++) {
  const lines = (notes[n] || []).map(([t, w]) => `<span data-w="${w}">${t}</span>`).join("");
  html += `<div class="row${n < 62 ? " tall" : ""}${n > 80 ? " end" : ""}"><div class="n">${n}</div><div class="c">${n < 62 ? "N/A" : ""}</div><div class="d">${lines}</div><div class="e">${n < 81 ? '"' : ""}</div><div class="f">${n < 81 ? "<i></i>" : ""}</div></div>`;
}
document.getElementById("rows").innerHTML = html;

// Track each label out to its nominal width.
document.querySelectorAll("[data-w]").forEach(el => {
  const want = +el.dataset.w;
  const range = document.createRange();
  range.selectNodeContents(el);
  const natural = range.getBoundingClientRect().width;
  el.style.letterSpacing = (want - natural) / el.textContent.length + "px";
  el.style.width = want + "px";
});
```
